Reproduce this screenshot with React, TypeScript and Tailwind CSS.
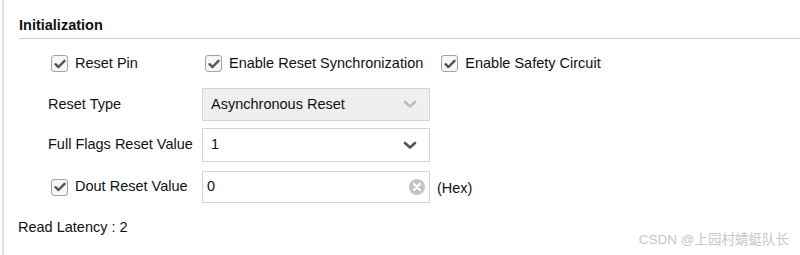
import React from "react";

const Check = () => (
  <span className="flex h-[17px] w-[17px] shrink-0 items-center justify-center rounded-[3px] border-[1.5px] border-[#a3a3a3] bg-[#f7f7f7]">
    <svg width="12" height="10" viewBox="0 0 12 10">
      <path d="M1.5 5.2 L4.5 8 L10.5 1.8" fill="none" stroke="#555" strokeWidth="2.4" strokeLinecap="round" strokeLinejoin="round" />
    </svg>
  </span>
);

const Chevron = ({ color }: { color: string }) => (
  <svg width="14" height="9" viewBox="0 0 14 9">
    <path d="M2 2 L7 6.5 L12 2" fill="none" stroke={color} strokeWidth="2.6" strokeLinecap="round" strokeLinejoin="round" />
  </svg>
);

const CheckItem = ({ label }: { label: string }) => (
  <div className="flex items-center gap-[7px]">
    <Check />
    <span>{label}</span>
  </div>
);

const App = () => {
  return (
    <div
      className="relative flex h-[255px] w-[800px] overflow-hidden bg-white text-[14.5px] text-[#111]"
      style={{ fontFamily: '"Liberation Sans", Arial, sans-serif' }}
    >
      <div className="ml-[2px] w-[2px] shrink-0 bg-[#e0e0e0]" />
      <div className="flex flex-1 flex-col pl-[15px]">
        <div className="border-b border-[#d0d0d0] pb-[4px] pt-[16px] text-[14.5px] font-bold leading-[18px]">
          Initialization
        </div>

        <div className="mt-[16px] flex h-[17px] items-center pl-[32px] leading-[17px]">
          <div className="w-[154px]">
            <CheckItem label="Reset Pin" />
          </div>
          <div className="mr-[18px]">
            <CheckItem label="Enable Reset Synchronization" />
          </div>
          <CheckItem label="Enable Safety Circuit" />
        </div>

        <div className="mt-[16px] flex items-center pl-[29px]">
          <div className="w-[154px]">Reset Type</div>
          <div className="flex h-[33px] w-[228px] items-center justify-between border border-[#d4d4d4] bg-[#efefef] pl-[8px] pr-[12px]">
            <span>Asynchronous Reset</span>
            <Chevron color="#bdbdbd" />
          </div>
        </div>

        <div className="mt-[7px] flex items-center pl-[29px]">
          <div className="w-[154px]">Full Flags Reset Value</div>
          <div className="flex h-[34px] w-[228px] items-center justify-between border border-[#d4d4d4] bg-white pl-[8px] pr-[12px]">
            <span>1</span>
            <Chevron color="#555" />
          </div>
        </div>

        <div className="mt-[9px] flex items-center pl-[32px]">
          <div className="w-[151px]">
            <CheckItem label="Dout Reset Value" />
          </div>
          <div className="flex h-[32px] w-[228px] items-center justify-between border border-[#d4d4d4] bg-white pl-[4px] pr-[4px]">
            <span>0</span>
            <svg width="16" height="16" viewBox="0 0 16 16">
              <circle cx="8" cy="8" r="8" fill="#c4c4c4" />
              <path d="M5 5 L11 11 M11 5 L5 11" stroke="#fff" strokeWidth="2.2" strokeLinecap="round" />
            </svg>
          </div>
          <span className="ml-[7px] mt-[3px]">(Hex)</span>
        </div>

        <div className="mt-[15px] -ml-[1px] leading-[18px]">Read Latency : 2</div>
      </div>

      <div
        className="absolute bottom-[6px] right-[11px] text-[13.5px] leading-[18px] text-[#c8c8c8]"
        style={{ fontFamily: '"Liberation Sans", "Noto Sans CJK SC", sans-serif' }}
      >
        CSDN @上园村蜻蜓队长
      </div>
    </div>
  );
};

export default App;
